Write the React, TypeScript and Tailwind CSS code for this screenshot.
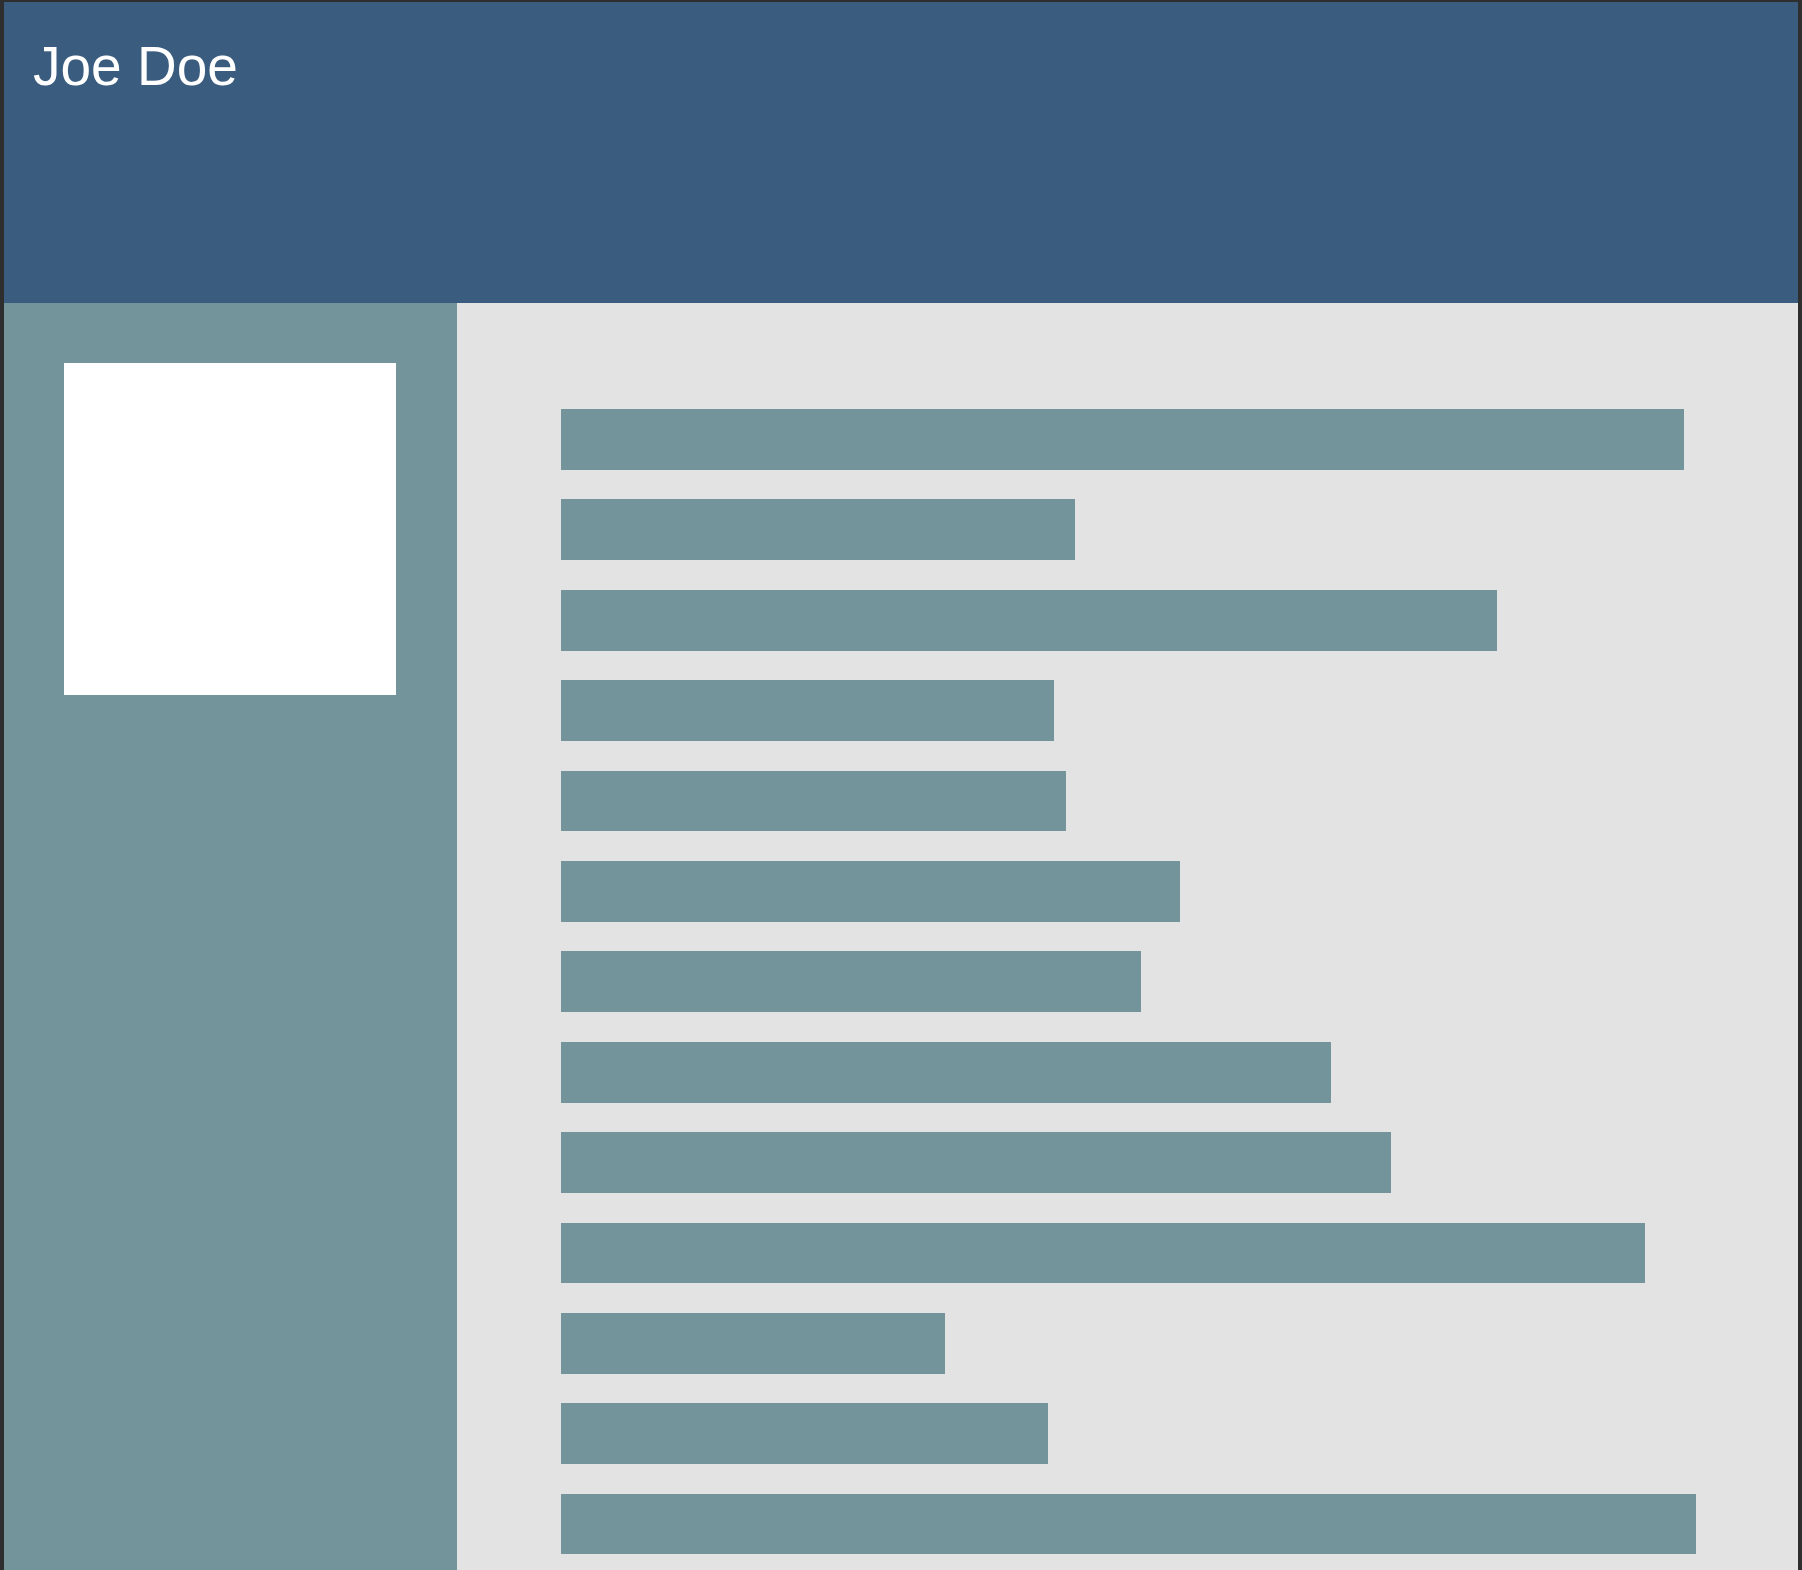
import React from "react";

const bars = [1123, 514, 936, 493, 505, 619, 580, 770, 830, 1084, 384, 487, 1135];

export default function App() {
  return (
    <div className="h-[1570px] overflow-hidden bg-[#2e2e2e] pt-[2px] px-[4px]">
      <div className="flex h-full flex-col">
        <header className="h-[301px] shrink-0 bg-[#3a5c7e] pl-[29px] pt-[34px]">
          <h1
            className="text-[55px] leading-[1.117] text-white"
            style={{ fontFamily: '"Liberation Sans", Arial, sans-serif' }}
          >
            Joe Doe
          </h1>
        </header>
        <div className="flex flex-1">
          <aside className="w-[453px] shrink-0 bg-[#73949a] pl-[60px] pt-[60px]">
            <div className="h-[332px] w-[332px] bg-white" />
          </aside>
          <main className="flex-1 bg-[#e3e3e3] pl-[104px] pt-[106px]">
            <div className="flex flex-col gap-[29.6px]">
              {bars.map((w, i) => (
                <div key={i} className="h-[60.8px] bg-[#73949a]" style={{ width: w }} />
              ))}
            </div>
          </main>
        </div>
      </div>
    </div>
  );
}
